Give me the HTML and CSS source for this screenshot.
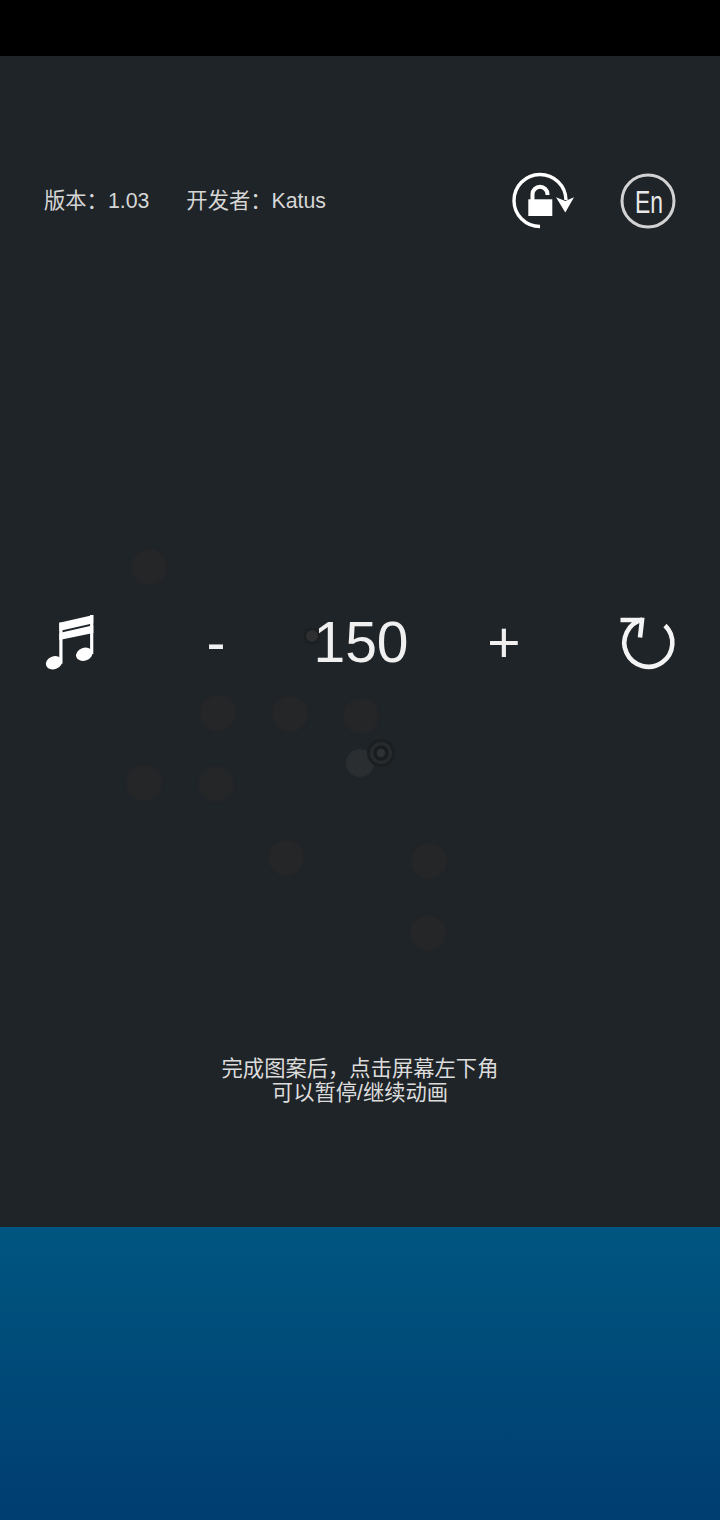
FILE: index.html
```html
<!DOCTYPE html>
<html lang="zh-CN">
<head>
  <meta charset="UTF-8">
  <title>Katus</title>
  <link rel="stylesheet" href="styles.css">
</head>
<body>

  <div class="status-bar"></div>

  <div class="stage">
    <!-- pattern dots, free canvas in page coordinates -->
    <svg class="dots" viewBox="0 56 720 1171" width="720" height="1171">
      <circle class="dot" cx="149" cy="567" r="18"/>
      <circle class="dot" cx="218" cy="713" r="18"/>
      <circle class="dot" cx="290" cy="714" r="18"/>
      <circle class="dot" cx="361" cy="716" r="18"/>
      <circle class="dot" cx="144" cy="783" r="18"/>
      <circle class="dot" cx="216" cy="784" r="18"/>
      <circle class="dot" cx="286" cy="858" r="18"/>
      <circle class="dot" cx="429" cy="861" r="18"/>
      <circle class="dot" cx="428" cy="933" r="18"/>
      <circle class="dot-light" cx="360" cy="763" r="14"/>
      <circle class="dot-small" cx="312" cy="636" r="7"/>
      <circle class="target-outer" cx="381" cy="753" r="12.5"/>
      <circle class="target-ring" cx="381" cy="753" r="6"/>
    </svg>

    <div class="top-row">
      <span class="info version">版本：1.03</span>
      <span class="info">开发者：Katus</span>

      <svg class="icon-lock" width="64" height="58" viewBox="0 0 64 58">
        <path class="line" d="M29 54.5A26 26 0 1 1 55 28"/>
        <path class="fill" d="M45 25.3L54.3 29L63 25.3L54.3 40.5Z"/>
        <rect class="fill" x="17.3" y="27.3" width="24" height="16.7"/>
        <path class="line-thick" d="M21.5 28V22.3a7.5 7.5 0 0 1 15 0V23"/>
      </svg>

      <svg class="icon-lang" width="56" height="56" viewBox="0 0 56 56">
        <circle class="lang-ring" cx="28" cy="28" r="26"/>
        <text class="lang-text" x="15" y="39.7" textLength="28" lengthAdjust="spacingAndGlyphs">En</text>
      </svg>
    </div>

    <div class="controls">
      <div class="cell">
        <svg class="icon-music" width="60" height="65" viewBox="0 0 60 65">
          <path class="fill" d="M19.3 12.7L53.3 5V13.3L19.3 21Z"/>
          <path class="fill" d="M19.3 23L53.3 15.3V23L19.3 30Z"/>
          <rect class="fill" x="19.3" y="12.7" width="3.2" height="41"/>
          <rect class="fill" x="50.1" y="5" width="3.2" height="39"/>
          <ellipse class="fill" cx="14" cy="52.7" rx="8.4" ry="6.4" transform="rotate(-20 14 52.7)"/>
          <ellipse class="fill" cx="44.3" cy="44.3" rx="8.4" ry="6.4" transform="rotate(-20 44.3 44.3)"/>
        </svg>
      </div>
      <div class="cell">-</div>
      <div class="cell number">150</div>
      <div class="cell">+</div>
      <div class="cell">
        <svg width="60" height="60" viewBox="0 0 60 60">
          <path class="line-refresh" d="M47 13.5A24 24 0 1 1 24.5 7.5"/>
          <path class="line-refresh" d="M2.5 8H24L22 25.5"/>
        </svg>
      </div>
    </div>

    <p class="hint">完成图案后，点击屏幕左下角<br>可以暂停/继续动画</p>
  </div>

  <div class="water"></div>

</body>
</html>
```

FILE: styles.css
```css
* {
  box-sizing: border-box;
}

body {
  margin: 0;
  width: 720px;
  height: 1520px;
  overflow: hidden;
  background-color: #1f2428;
  font-family: "Liberation Sans", "Noto Sans CJK SC", sans-serif;
}

.status-bar {
  height: 56px;
  background-color: #000;
}

.stage {
  position: relative;
  display: flex;
  flex-direction: column;
  height: 1171px;
  padding-top: 116px;
  background-color: #1f2428;
}

.dots {
  position: absolute;
  top: 0;
  left: 0;
}

.dot {
  fill: #252628;
  filter: blur(0.8px);
}

.dot-light {
  fill: #2a2e30;
  filter: blur(0.6px);
}

.dot-small {
  fill: #2d2f31;
  stroke: #1b1f21;
  stroke-width: 2;
}

.target-outer {
  fill: #272b2e;
  stroke: #1b1f21;
  stroke-width: 3;
}

.target-ring {
  fill: #2f3235;
  stroke: #1a1d1f;
  stroke-width: 3.5;
}

.top-row {
  position: relative;
  display: flex;
  align-items: center;
  height: 58px;
  padding: 0 44px;
}

.info {
  font-size: 21.3px;
  line-height: 24px;
  color: #d6d6d6;
}

.version {
  margin-right: 37px;
}

.icon-lock {
  margin-left: auto;
}

.icon-lang {
  margin-left: 45px;
}

.icon-music {
  margin-left: -4px;
}

.fill {
  fill: #fff;
}

.line {
  fill: none;
  stroke: #fff;
  stroke-width: 3.4;
}

.line-thick {
  fill: none;
  stroke: #fff;
  stroke-width: 4;
}

.line-refresh {
  fill: none;
  stroke: #f4f4f4;
  stroke-width: 4.6;
}

.lang-ring {
  fill: none;
  stroke: #d2d2d2;
  stroke-width: 3;
}

.lang-text {
  fill: #e8e8e8;
  font-family: "Liberation Sans", sans-serif;
  font-size: 32px;
}

.controls {
  position: relative;
  display: grid;
  grid-template-columns: repeat(5, 144px);
  grid-template-rows: 60px;
  height: 60px;
  margin-top: 382px;
}

.cell {
  display: flex;
  align-items: center;
  justify-content: center;
  font-size: 57px;
  color: #f0f0f0;
}

.number {
  padding-left: 2px;
}

.hint {
  position: relative;
  margin: 385px 0 0;
  font-size: 21.3px;
  line-height: 24px;
  text-align: center;
  color: #dcdcdc;
}

.water {
  height: 293px;
  background: linear-gradient(#005680, #003d70);
}
```
